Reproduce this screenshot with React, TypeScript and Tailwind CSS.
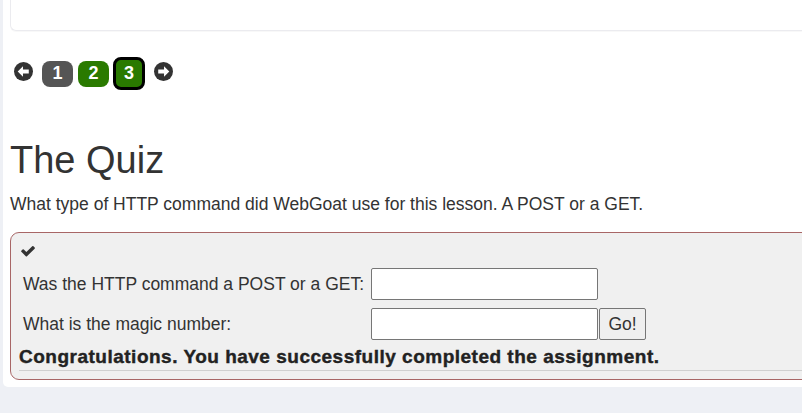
import React from "react";

const font = { fontFamily: '"Liberation Sans", Arial, Helvetica, sans-serif' };

function ArrowCircle({ dir }: { dir: "left" | "right" }) {
  return (
    <svg width="19" height="19" viewBox="0 0 18 18" className="mb-[4px]">
      <circle cx="9" cy="9" r="9" fill="#333" />
      {dir === "left" ? (
        <path d="M3.5 9 L8.5 4 L8.5 7 L14 7 L14 11 L8.5 11 L8.5 14 Z" fill="#fff" />
      ) : (
        <path d="M14.5 9 L9.5 4 L9.5 7 L4 7 L4 11 L9.5 11 L9.5 14 Z" fill="#fff" />
      )}
    </svg>
  );
}

export default function App() {
  return (
    <div className="w-[802px] h-[413px] overflow-hidden bg-[#eef0f5] pl-[3px] text-[#333]" style={font}>
      <div className="bg-white h-[387px] rounded-bl-[5px] overflow-hidden">
        {/* top card */}
        <div className="ml-[7px] h-[31px] rounded-bl-[6px] border-b border-l border-[#ebebef] shadow-[0_1px_1px_rgba(0,0,0,0.03)]" />

        {/* pagination */}
        <div className="flex items-center h-[33px] mt-[26px] ml-[11px]">
          <ArrowCircle dir="left" />
          <div className="ml-[9px] w-[31px] h-[26px] rounded-[8px] bg-[#555] text-white font-bold text-[18px] flex items-center justify-center">1</div>
          <div className="ml-[5px] w-[31px] h-[26px] rounded-[8px] bg-[#2a7a00] text-white font-bold text-[18px] flex items-center justify-center">2</div>
          <div className="ml-[4px] w-[32px] h-[33px] rounded-[8px] bg-[#2a7a00] border-[3px] border-black text-white font-bold text-[18px] flex items-center justify-center">3</div>
          <div className="ml-[9px] flex">
            <ArrowCircle dir="right" />
          </div>
        </div>

        {/* title */}
        <h1 className="mt-[50px] ml-[7px] text-[38px] leading-[40px] font-normal">The Quiz</h1>
        <p className="mt-[14px] ml-[7px] text-[17.5px] leading-[20px]">
          What type of HTTP command did WebGoat use for this lesson. A POST or a GET.
        </p>

        {/* quiz box */}
        <div className="mt-[18px] ml-[7px] w-[830px] border border-[#a86666] rounded-[9px] bg-[#f0f0f0] pt-[8px] pb-[8px] pl-[8px]">
          <div className="h-[20px] flex items-center pl-[1px]">
            <svg width="16" height="14" viewBox="0 200 1792 1400">
              <path
                fill="#333"
                d="M1671 566q0 40-28 68l-724 724-136 136q-28 28-68 28t-68-28l-136-136-362-362q-28-28-28-68t28-68l136-136q28-28 68-28t68 28l294 295 656-657q28-28 68-28t68 28l136 136q28 28 28 68z"
              />
            </svg>
          </div>
          <div className="mt-[7px] flex flex-col gap-[8px] text-[17.5px]">
            <div className="flex items-center h-[32px]">
              <div className="w-[352px] pl-[4px]">Was the HTTP command a POST or a GET:</div>
              <input className="w-[227px] h-[32px] bg-white border border-[#767676] rounded-[2px]" />
            </div>
            <div className="flex items-center h-[32px]">
              <div className="w-[352px] pl-[4px]">What is the magic number:</div>
              <input className="w-[227px] h-[32px] bg-white border border-[#767676] rounded-[2px]" />
              <button className="ml-[1px] w-[47px] h-[32px] bg-[#efefef] border border-[#767676] rounded-[2px] text-[17.5px] text-[#333]">Go!</button>
            </div>
          </div>
          <div className="mt-[7px] h-[20px] flex items-center text-[19px] font-bold tracking-[0.5px] text-[#222] [-webkit-text-stroke:0.4px_#222]">
            Congratulations. You have successfully completed the assignment.
          </div>
          <div className="mt-[3px] border-t border-[#d0d0d0]" />
        </div>
      </div>
    </div>
  );
}
